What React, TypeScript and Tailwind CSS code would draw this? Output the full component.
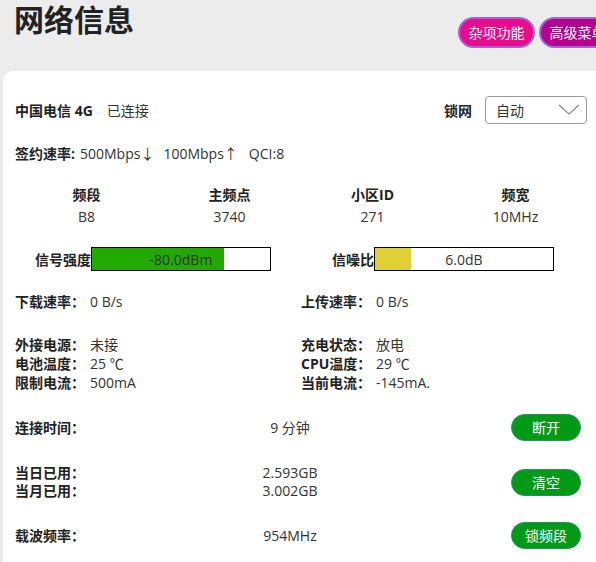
const cells = [
  { head: '频段', value: 'B8' },
  { head: '主频点', value: '3740' },
  { head: '小区ID', value: '271' },
  { head: '频宽', value: '10MHz' },
];

function Bar({ label, value, pct, color }: { label: string; value: string; pct: number; color: string }) {
  return (
    <div className="flex items-center">
      <span className="w-[76px] text-right font-bold text-[#222]">{label}</span>
      <div className="relative h-[24px] w-[180px] border border-black bg-white">
        <div className={`h-full ${color}`} style={{ width: `${pct}%` }} />
        <span className="absolute inset-0 flex items-center justify-center text-[#333]">{value}</span>
      </div>
    </div>
  );
}

function Field({ label, value }: { label: string; value: string }) {
  return (
    <div className="flex h-[19px] items-center">
      <span className="w-[75px] font-bold text-[#222]">{label}</span>
      <span className="text-[#333]">{value}</span>
    </div>
  );
}

function GreenButton({ children }: { children: React.ReactNode }) {
  return (
    <button className="h-[27px] w-[70px] rounded-full border border-[#2b8c6e] bg-[#009a17] text-[14px] text-white">
      {children}
    </button>
  );
}

export default function App() {
  return (
    <div
      className="h-[562px] w-[596px] overflow-hidden bg-[#ececec] text-[14px] text-[#333]"
      style={{ fontFamily: '"Open Sans", "Noto Sans CJK SC", sans-serif' }}
    >
      {/* Header */}
      <div className="flex h-[71px] w-[616px]">
        <h1 className="ml-[14px] h-[40px] text-[30px] font-bold leading-[40px] text-[#222]">网络信息</h1>
        <div className="ml-auto mt-[17px] flex gap-[4px]">
          <button className="h-[31px] w-[77px] shrink-0 rounded-full border-2 border-[#9a6ad6] bg-[#ea0a8e] text-[14px] text-white">
            杂项功能
          </button>
          <button className="h-[31px] w-[77px] shrink-0 rounded-full border-2 border-[#9a6ad6] bg-[#b6008f] text-[14px] text-white">
            高级菜单
          </button>
        </div>
      </div>

      {/* Card */}
      <div className="ml-[3px] h-[491px] w-[620px] rounded-tl-[10px] bg-white pt-[25px]">
        <div className="ml-[12px] w-[572px]">
          <div className="flex h-[28px] items-center justify-between">
            <div className="flex items-center">
              <span className="font-bold text-[#222]">中国电信 4G</span>
              <span className="ml-[14px]">已连接</span>
            </div>
            <div className="flex items-center">
              <span className="font-bold text-[#222]">锁网</span>
              <div className="ml-[13px] flex h-[28px] w-[102px] items-center justify-between rounded-[4px] border border-[#999] pl-[10px] pr-[6px]">
                <span>自动</span>
                <svg width="22" height="12" viewBox="0 0 22 12" fill="none" stroke="#888" strokeWidth="1.2">
                  <polyline points="1,1 11,10 21,1" />
                </svg>
              </div>
            </div>
          </div>

          <div className="mt-[19px] flex h-[20px] items-center">
            <span className="font-bold text-[#222]">签约速率:</span>
            <span className="ml-[5px]">500Mbps↓</span>
            <span className="ml-[9px]">100Mbps↑</span>
            <span className="ml-[11px]">QCI:8</span>
          </div>

          <div className="mt-[22px] grid grid-cols-4 text-center">
            {cells.map((c) => (
              <div key={c.head}>
                <div className="h-[20px] font-bold leading-[20px] text-[#222]">{c.head}</div>
                <div className="mt-[2px] h-[20px] leading-[20px]">{c.value}</div>
              </div>
            ))}
          </div>

          <div className="mt-[20px] grid grid-cols-[283px_1fr]">
            <Bar label="信号强度" value="-80.0dBm" pct={74} color="bg-[#22aa00]" />
            <Bar label="信噪比" value="6.0dB" pct={20} color="bg-[#e0d035]" />
          </div>

          <div className="mt-[21px] grid grid-cols-[286px_1fr]">
            <Field label="下载速率：" value="0 B/s" />
            <Field label="上传速率：" value="0 B/s" />
          </div>

          <div className="mt-[24px] grid grid-cols-[286px_1fr]">
            <div>
              <Field label="外接电源：" value="未接" />
              <Field label="电池温度：" value="25 ℃" />
              <Field label="限制电流：" value="500mA" />
            </div>
            <div>
              <Field label="充电状态：" value="放电" />
              <Field label="CPU温度：" value="29 ℃" />
              <Field label="当前电流：" value="-145mA." />
            </div>
          </div>

          <div className="mt-[22px] grid h-[27px] grid-cols-[200px_150px_1fr] items-center">
            <span className="font-bold text-[#222]">连接时间：</span>
            <span className="text-center">9 分钟</span>
            <div className="flex justify-end pr-[6px]">
              <GreenButton>断开</GreenButton>
            </div>
          </div>

          <div className="mt-[23px] grid h-[36px] grid-cols-[200px_150px_1fr] items-center">
            <div>
              <div className="h-[18px] font-bold leading-[18px] text-[#222]">当日已用：</div>
              <div className="h-[18px] font-bold leading-[18px] text-[#222]">当月已用：</div>
            </div>
            <div className="text-center">
              <div className="h-[18px] leading-[18px]">2.593GB</div>
              <div className="h-[18px] leading-[18px]">3.002GB</div>
            </div>
            <div className="flex justify-end pr-[6px]">
              <GreenButton>清空</GreenButton>
            </div>
          </div>

          <div className="mt-[22px] grid h-[27px] grid-cols-[200px_150px_1fr] items-center">
            <span className="font-bold text-[#222]">载波频率：</span>
            <span className="text-center">954MHz</span>
            <div className="flex justify-end pr-[6px]">
              <GreenButton>锁频段</GreenButton>
            </div>
          </div>
        </div>
      </div>
    </div>
  );
}
